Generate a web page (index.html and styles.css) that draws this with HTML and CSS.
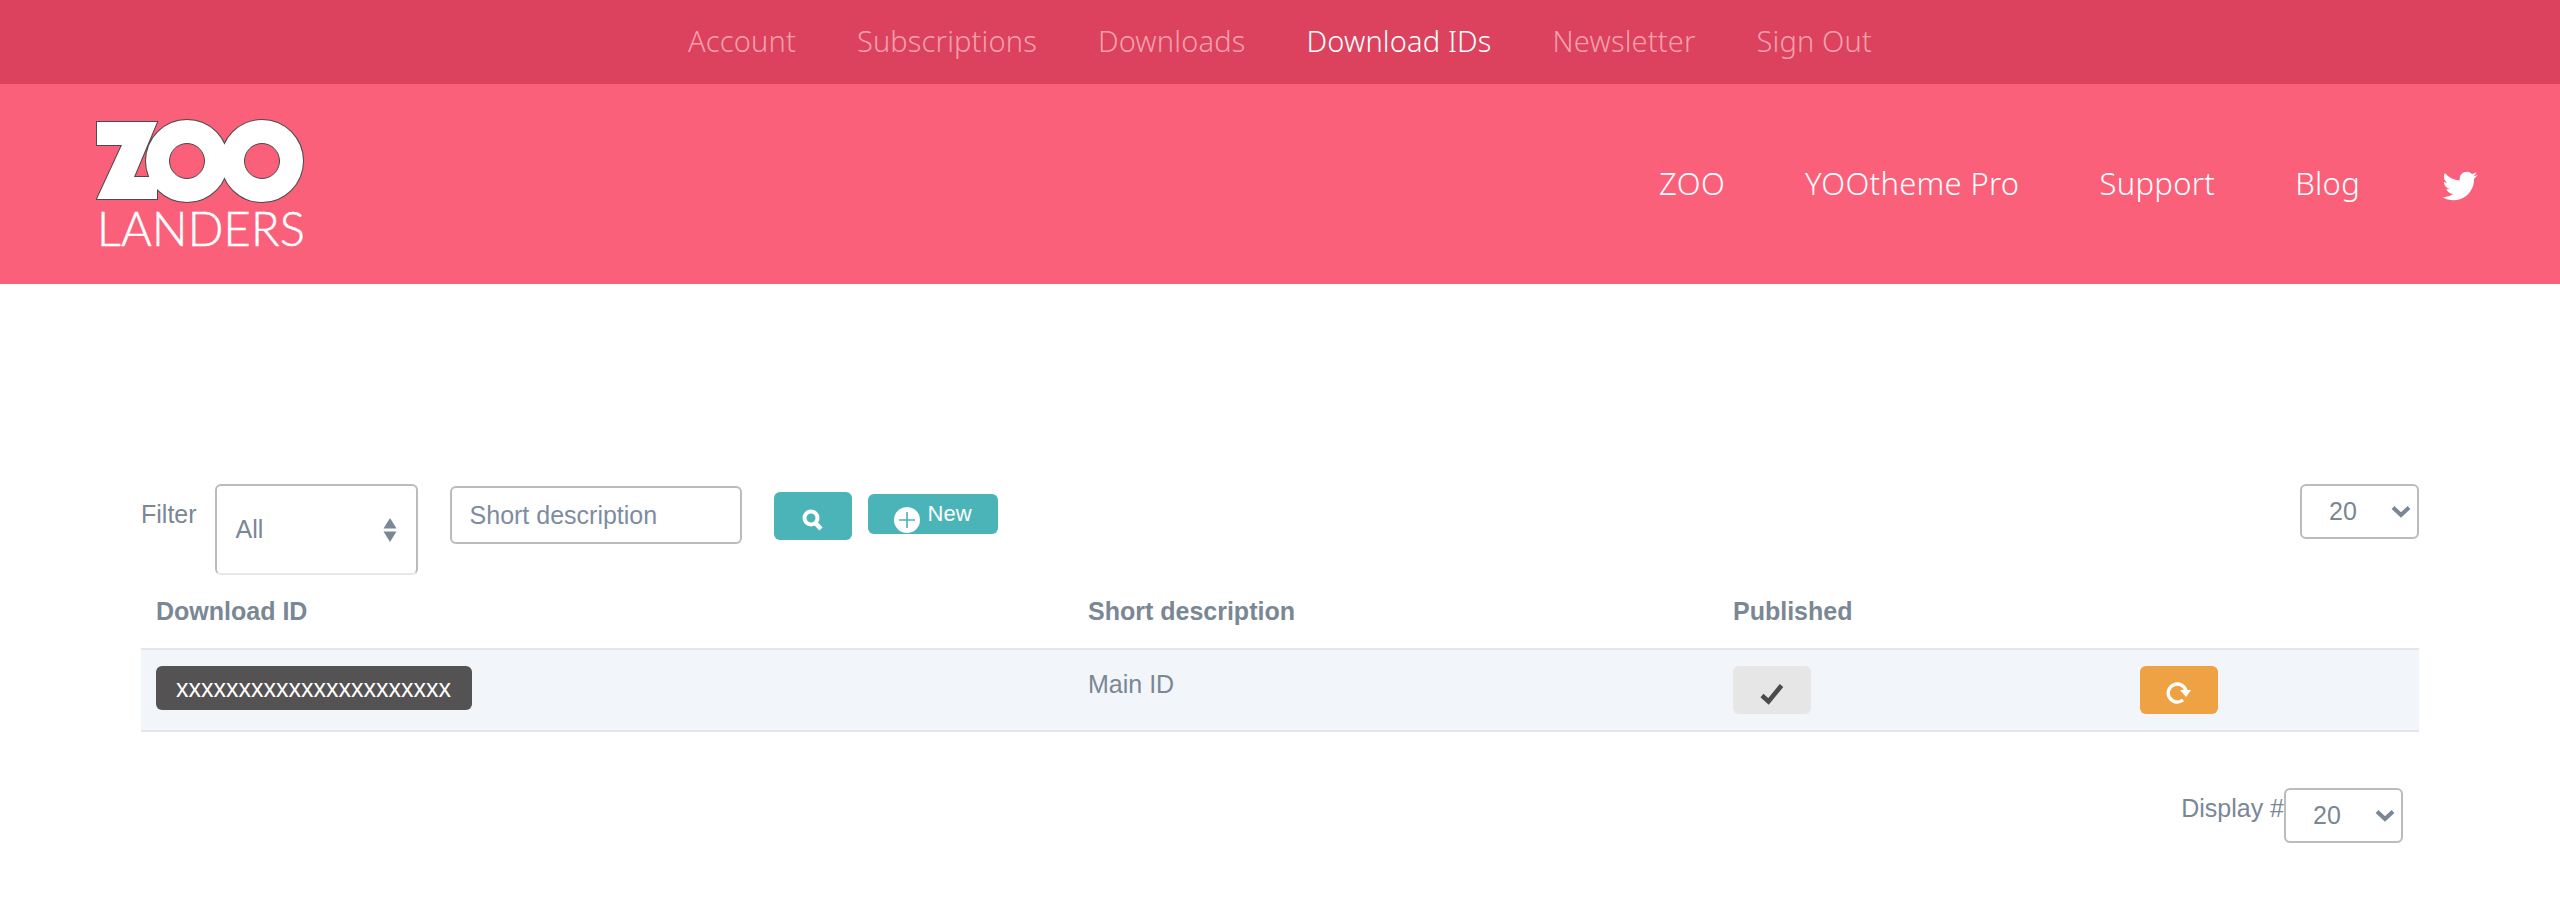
FILE: index.html
```html
<!DOCTYPE html>
<html lang="en" dir="ltr">
  <head>
    <meta charset="utf-8">
    <title>Download IDs</title>
    <link rel="stylesheet" href="styles.css">
  </head>
  <body>
    <nav class="topbar">
      <a href="#">Account</a>
      <a href="#">Subscriptions</a>
      <a href="#">Downloads</a>
      <a href="#" class="active">Download IDs</a>
      <a href="#">Newsletter</a>
      <a href="#">Sign Out</a>
    </nav>

    <header class="masthead">
      <a href="#" class="logo">
        <svg class="logo-mark" width="210" height="88" viewBox="96 118 210 88" role="img" aria-label="ZOO">
          <g class="logo-edge">
            <polygon points="97,122 157,122 134,177 157,177 157,199 97,199 122,145 97,145"/>
            <circle cx="187" cy="161" r="41"/>
            <circle cx="262" cy="161" r="41"/>
          </g>
          <g class="logo-fill">
            <polygon points="97,122 157,122 134,177 157,177 157,199 97,199 122,145 97,145"/>
            <circle cx="187" cy="161" r="41"/>
            <circle cx="262" cy="161" r="41"/>
          </g>
          <circle class="logo-hole" cx="187" cy="161" r="17.5"/>
          <circle class="logo-hole" cx="262" cy="161" r="17.5"/>
        </svg>
        <span class="logo-word">LANDERS</span>
      </a>
      <div class="mainnav">
        <a href="#">ZOO</a>
        <a href="#">YOOtheme Pro</a>
        <a href="#">Support</a>
        <a href="#">Blog</a>
        <a href="#" class="bird" aria-label="Twitter">
          <svg width="40" height="40" viewBox="0 0 1792 1792"><path fill="#fff" d="M1684 408q-67 98-162 167 1 14 1 42 0 130-38 259.5t-115.5 248.5-184.5 210.5-258 146-323 54.5q-271 0-496-145 35 4 78 4 225 0 401-138-105-2-188-64.5t-114-159.5q33 5 61 5 43 0 85-11-112-23-185.5-111.5t-73.5-205.5v-4q68 38 146 41-66-44-105-115t-39-154q0-88 44-163 121 149 294.5 238.5t371.5 99.5q-8-38-8-74 0-134 94.5-228.5t228.5-94.5q140 0 236 102 109-21 201-77-35 110-132 174 88-12 176-51z"/></svg>
        </a>
      </div>
    </header>

    <main class="content">
      <div class="toolbar">
        <label class="filter-label">Filter</label>
        <div class="select select-filter">
          <span>All</span>
          <svg width="14" height="24" viewBox="0 0 14 24"><path fill="#7a8794" d="M7 0l6.500 10.500h-13zM7 24l-6.500-10.500h13z"/></svg>
        </div>
        <input class="search-input" type="text" placeholder="Short description">
        <button class="btn btn-search" aria-label="Search">
          <svg width="22" height="22" viewBox="0 0 22 22"><circle cx="9" cy="9" r="6.500" fill="none" stroke="#fff" stroke-width="4"/><path d="M13.500 14l5.500 6" stroke="#fff" stroke-width="4.500" fill="none"/></svg>
        </button>
        <button class="btn btn-new">
          <svg class="plus" width="26" height="26" viewBox="0 0 26 26"><circle cx="13" cy="13" r="13" fill="#fff"/><path d="M13 5v16M5 13h16" stroke="#4ab4b8" stroke-width="1.600"/></svg>
          New
        </button>
        <div class="select select-limit">
          <span>20</span>
          <svg width="20" height="13" viewBox="0 0 20 13"><path d="M2 2.500l8 7.500 8-7.500" fill="none" stroke="#7a8794" stroke-width="4"/></svg>
        </div>
      </div>

      <table class="ids">
        <colgroup>
          <col class="col-id">
          <col class="col-desc">
          <col class="col-pub">
          <col>
        </colgroup>
        <thead>
          <tr>
            <th>Download ID</th>
            <th>Short description</th>
            <th>Published</th>
            <th></th>
          </tr>
        </thead>
        <tbody>
          <tr>
            <td><span class="badge">xxxxxxxxxxxxxxxxxxxxxx</span></td>
            <td>Main ID</td>
            <td>
              <button class="btn btn-state" aria-label="Published">
                <svg width="24" height="22" viewBox="0 0 24 22"><path d="M2 12.500l6.500 6 13-16" fill="none" stroke="#4c4a4b" stroke-width="4.500"/></svg>
              </button>
            </td>
            <td>
              <button class="btn btn-reset" aria-label="Reset">
                <svg width="26" height="24" viewBox="0 0 26 24"><path d="M20 9A9 9 0 1 0 17 18" fill="none" stroke="#fff" stroke-width="3.400"/><path d="M14 8h11l-5 7z" fill="#fff"/></svg>
              </button>
            </td>
          </tr>
        </tbody>
      </table>

      <div class="pager">
        <label class="pager-label">Display #</label>
        <div class="select select-limit">
          <span>20</span>
          <svg width="20" height="13" viewBox="0 0 20 13"><path d="M2 2.500l8 7.500 8-7.500" fill="none" stroke="#7a8794" stroke-width="4"/></svg>
        </div>
      </div>
    </main>
  </body>
</html>
```

FILE: styles.css
```css
body{
  margin: 0;
  background-color: #fff;
  color: #7a8794;
  font-family: "Liberation Sans", Arial, sans-serif;
  font-size: 25px;
}
a{
  text-decoration: none;
}

/* top bar */
.topbar{
  box-sizing: border-box;
  height: 84px;
  padding-bottom: 3px;
  background-color: #dc415d;
  display: flex;
  justify-content: center;
  align-items: center;
  gap: 61px;
  font-family: "Noto Sans", sans-serif;
  font-size: 29px;
  font-weight: 300;
  letter-spacing: 0.15px;
}
.topbar a{
  color: #f5a0ae;
}
.topbar a.active{
  color: #fff;
}

/* logo row */
.masthead{
  height: 200px;
  background-color: #fb607a;
  display: flex;
  justify-content: space-between;
  align-items: center;
  padding: 0 80px 0 96px;
}
.logo{
  align-self: flex-start;
  display: block;
  width: 210px;
  padding-top: 34px;
}
.logo-mark{
  display: block;
}
.logo-edge{
  fill: #4a4a4a;
  stroke: #4a4a4a;
  stroke-width: 2;
}
.logo-fill{
  fill: #fff;
}
.logo-hole{
  fill: #fb607a;
  stroke: #4a4a4a;
  stroke-width: 1;
}
.logo-word{
  display: block;
  margin-top: 5px;
  padding-left: 1px;
  color: #fff;
  font-family: Lato, sans-serif;
  font-size: 47px;
  font-weight: 300;
  line-height: 34px;
  letter-spacing: 0.2px;
  white-space: nowrap;
  -webkit-text-stroke: 0.5px #fff;
}
.mainnav{
  display: flex;
  align-items: center;
  gap: 80px;
  padding-bottom: 3px;
  font-family: "Noto Sans", sans-serif;
  font-size: 31px;
  font-weight: 300;
  letter-spacing: 0.3px;
}
.mainnav a{
  color: #fff;
}
.bird{
  display: flex;
  margin-top: 6px;
}

/* list */
.content{
  padding: 200px 141px 0;
}
.toolbar{
  display: flex;
  align-items: flex-start;
  height: 91px;
}
.filter-label{
  margin: 12px 18px 0 0;
  line-height: 36px;
}
.select{
  box-sizing: border-box;
  display: flex;
  justify-content: space-between;
  align-items: center;
  border: 2px solid #bbb;
  border-radius: 6px;
  background-color: #fff;
}
.select-filter{
  width: 203px;
  height: 91px;
  padding: 0 19px 0 19px;
  border-bottom-color: #e8e8e8;
}
.select-limit{
  width: 119px;
  height: 55px;
  padding: 0 6px 0 27px;
}
.search-input{
  box-sizing: border-box;
  width: 292px;
  height: 58px;
  margin: 2px 32px 0 32px;
  padding: 0 18px;
  border: 2px solid #bbb;
  border-radius: 6px;
  font-family: inherit;
  font-size: 25px;
  color: #7a8794;
}
.search-input::placeholder{
  color: #7e8ca1;
  opacity: 1;
}
.btn{
  box-sizing: border-box;
  display: inline-flex;
  justify-content: center;
  align-items: center;
  border: 0;
  border-radius: 6px;
  padding: 0;
  font-family: inherit;
  color: #fff;
}
.btn-search{
  width: 78px;
  height: 48px;
  margin: 8px 16px 0 0;
  padding-top: 8px;
  background-color: #4ab4b8;
}
.btn-new{
  width: 130px;
  height: 40px;
  margin: 10px auto 0 0;
  gap: 8px;
  background-color: #4ab4b8;
  font-size: 22px;
  align-items: flex-start;
  padding-top: 7px;
  line-height: 25px;
}
.plus{
  margin-top: 6px;
}

.ids{
  width: 100%;
  table-layout: fixed;
  border-collapse: separate;
  border-spacing: 0;
}
.col-id{
  width: 932px;
}
.col-desc{
  width: 645px;
}
.col-pub{
  width: 407px;
}
.ids th{
  height: 73px;
  padding: 0 0 0 15px;
  text-align: left;
  font-weight: bold;
}
.ids td{
  padding: 16px 0 16px 15px;
  background-color: #f2f5fa;
  border-top: 2px solid #e5e6ea;
  border-bottom: 2px solid #e5e6ea;
  line-height: 36px;
  vertical-align: top;
}
.badge{
  display: block;
  box-sizing: border-box;
  width: 316px;
  height: 44px;
  padding-left: 20px;
  border-radius: 6px;
  background-color: #545253;
  color: #fff;
  line-height: 44px;
}
.btn-state{
  width: 78px;
  height: 48px;
  padding-top: 8px;
  background-color: #e6e6e6;
  vertical-align: top;
}
.btn-reset{
  width: 78px;
  height: 48px;
  padding-top: 8px;
  background-color: #eea243;
  vertical-align: top;
}

.pager{
  display: flex;
  justify-content: flex-end;
  align-items: flex-start;
  padding: 56px 16px 0 0;
}
.pager-label{
  margin-top: 2px;
  line-height: 36px;
}
```
